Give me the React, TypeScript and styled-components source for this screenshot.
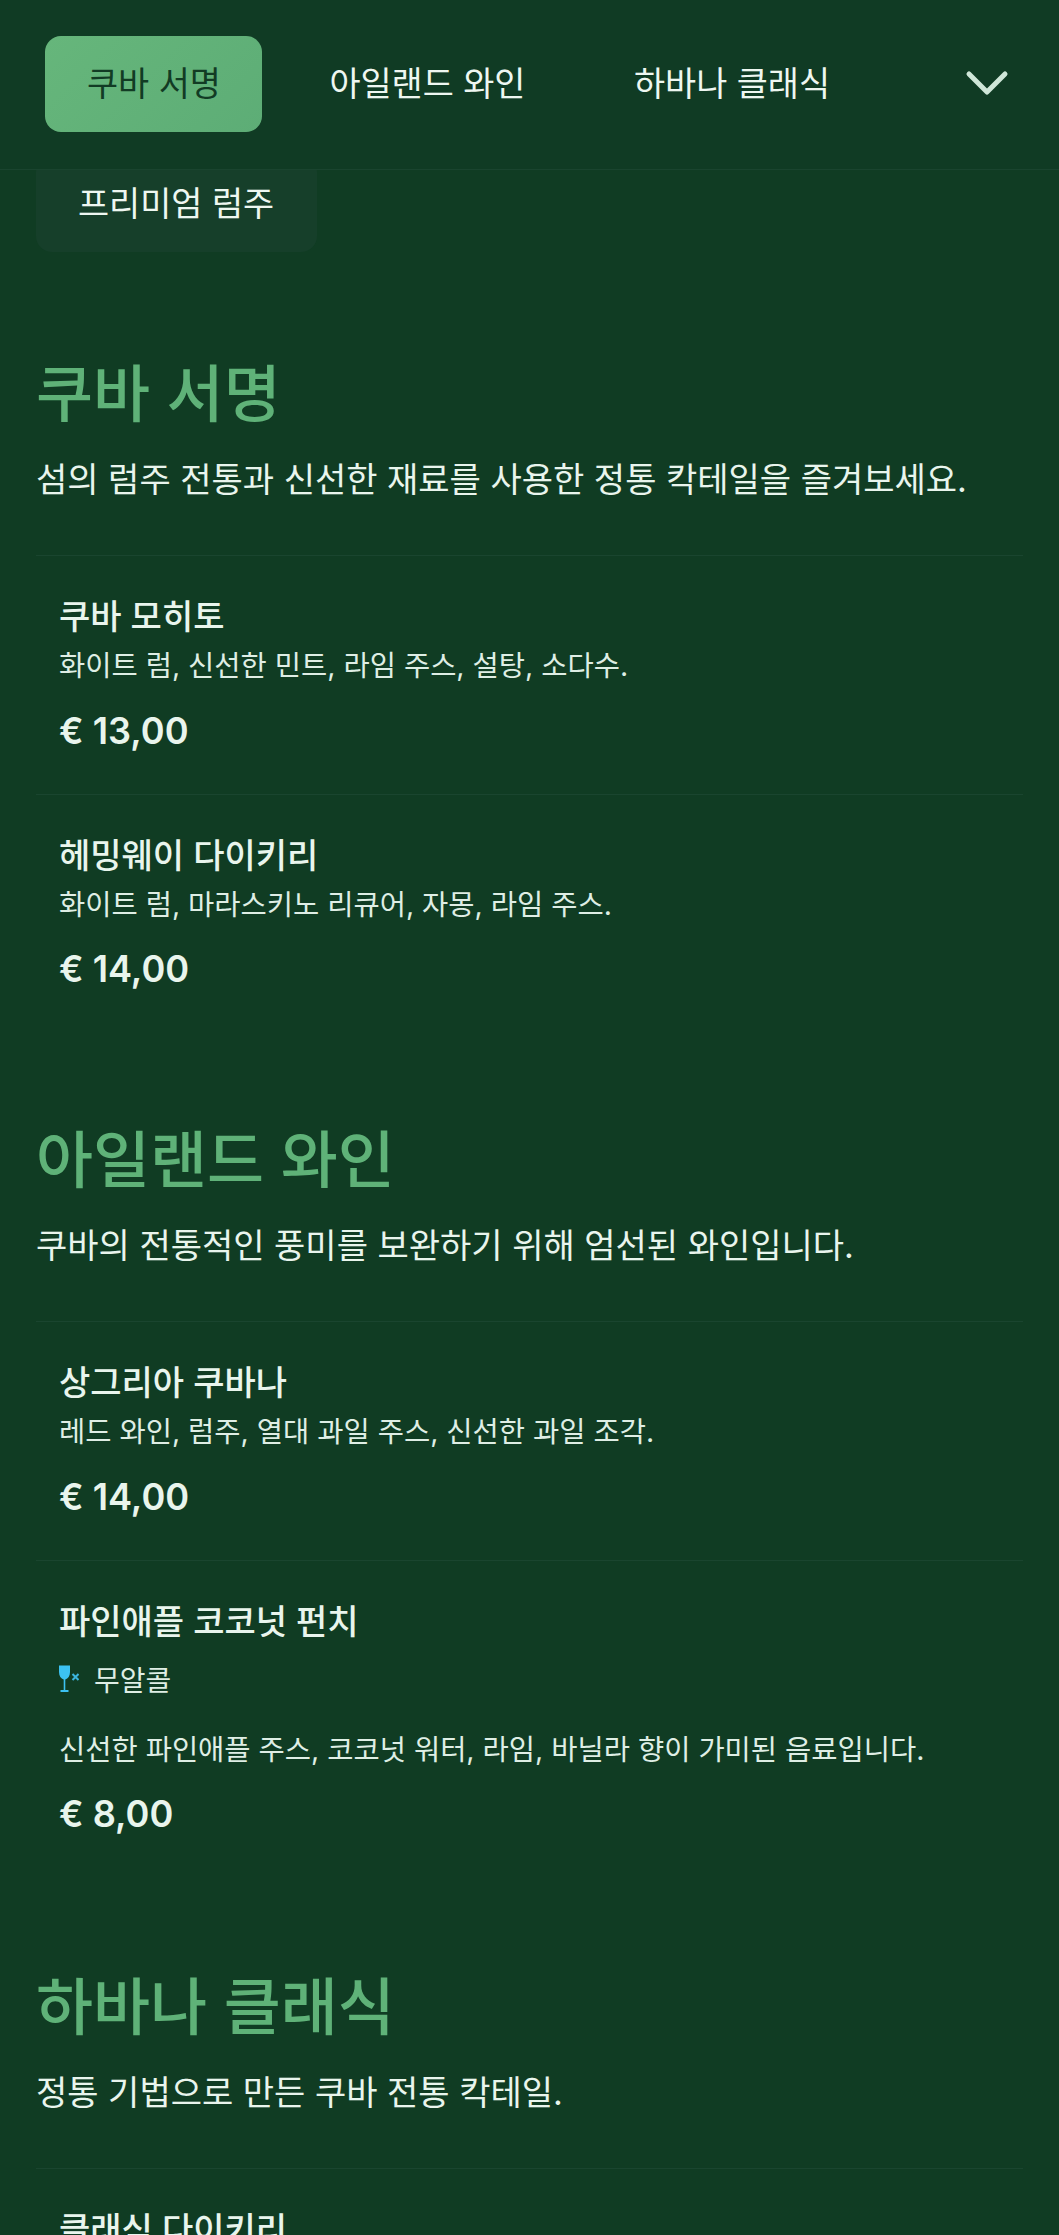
import React from 'react';
import styled, { createGlobalStyle } from 'styled-components';

const FONT = `Inter, "Noto Sans CJK KR", sans-serif`;

const GlobalStyle = createGlobalStyle`
    html, body {
        margin: 0;
        padding: 0;
        background: #103c23;
    }
    * { box-sizing: border-box; }
`;

const Page = styled.div`
    width: 1059px;
    height: 2235px;
    overflow: hidden;
    background: #103c23;
    color: #e9f5ed;
    font-family: ${FONT};
`;

const Header = styled.header`
    position: relative;
    z-index: 2;
    height: 170px;
    display: flex;
    align-items: flex-start;
    padding: 36px 50px 0 45px;
    background: #103b24;
    border-bottom: 1px solid #1a442f;
`;

const Tabs = styled.nav`
    display: flex;
    flex: 1;
    gap: 25.5px;
`;

const Tab = styled.div<{ $active?: boolean }>`
    height: 96px;
    padding: 0 41px 6px 42px;
    display: flex;
    align-items: center;
    border-radius: 16px;
    font-size: 33.8px;
    background: ${p => (p.$active ? 'linear-gradient(135deg, #66b67b, #5dad76)' : 'transparent')};
    color: ${p => (p.$active ? '#123b24' : '#eef7f1')};
`;

const Chevron = styled.svg`
    width: 44px;
    height: 27px;
    margin-top: 34px;
    flex: none;
`;

const Content = styled.main`
    padding: 0 36px;
`;

const Chip = styled.div`
    width: 281px;
    height: 96px;
    margin-top: -14px;
    padding: 0 0 6px 42px;
    display: flex;
    align-items: center;
    border-radius: 16px;
    background: #163f2a;
    font-size: 33.8px;
    color: #eef7f1;
`;

const Section = styled.section`
    margin-top: 93px;
    &:first-of-type { margin-top: 107px; }
`;

const Heading = styled.h2`
    margin: 0;
    height: 72px;
    line-height: 72px;
    font-size: 62px;
    font-weight: 500;
    color: #5fb278;
`;

const Intro = styled.p`
    margin: 25px 0 51px;
    line-height: 48px;
    font-size: 34px;
    color: #e9f5ed;
`;

const Item = styled.article<{ $tall?: boolean }>`
    padding: 37px 24px ${p => (p.$tall ? 43 : 41)}px 23px;
    border-top: 1px solid #1a452f;
`;

const ItemName = styled.h3`
    margin: 0;
    line-height: 48px;
    font-size: 34px;
    font-weight: 500;
    color: #e9f5ed;
`;

const ItemNote = styled.p`
    margin: 5px 0 0;
    line-height: 40px;
    font-size: 28.5px;
    color: #dfeee5;
`;

const Badge = styled.div`
    display: flex;
    align-items: center;
    gap: 15px;
    height: 40px;
    margin-top: 13.5px;
    margin-bottom: 30.5px;
    font-size: 28px;
    color: #dfeee5;
`;

const GlassIcon = styled.svg`
    width: 20px;
    height: 28px;
    flex: none;
`;

const Price = styled.div`
    margin-top: 22.5px;
    line-height: 44px;
    font-size: 36.2px;
    font-weight: 600;
    color: #e9f5ed;
`;

type MenuItem = { name: string; note: string; price: string; noAlcohol?: boolean };

const SECTIONS: { title: string; intro: string; items: MenuItem[] }[] = [
    {
        title: '쿠바 서명',
        intro: '섬의 럼주 전통과 신선한 재료를 사용한 정통 칵테일을 즐겨보세요.',
        items: [
            { name: '쿠바 모히토', note: '화이트 럼, 신선한 민트, 라임 주스, 설탕, 소다수.', price: '€ 13,00' },
            { name: '헤밍웨이 다이키리', note: '화이트 럼, 마라스키노 리큐어, 자몽, 라임 주스.', price: '€ 14,00' },
        ],
    },
    {
        title: '아일랜드 와인',
        intro: '쿠바의 전통적인 풍미를 보완하기 위해 엄선된 와인입니다.',
        items: [
            { name: '상그리아 쿠바나', note: '레드 와인, 럼주, 열대 과일 주스, 신선한 과일 조각.', price: '€ 14,00' },
            { name: '파인애플 코코넛 펀치', note: '신선한 파인애플 주스, 코코넛 워터, 라임, 바닐라 향이 가미된 음료입니다.', price: '€ 8,00', noAlcohol: true },
        ],
    },
    {
        title: '하바나 클래식',
        intro: '정통 기법으로 만든 쿠바 전통 칵테일.',
        items: [
            { name: '클래식 다이키리', note: '화이트 럼, 라임 주스, 설탕.', price: '€ 12,00' },
        ],
    },
];

const App: React.FC = () => (
    <Page>
        <GlobalStyle />
        <Header>
            <Tabs>
                <Tab $active>쿠바 서명</Tab>
                <Tab>아일랜드 와인</Tab>
                <Tab>하바나 클래식</Tab>
            </Tabs>
            <Chevron viewBox="0 0 44 27" fill="none">
                <path d="M4 4L22 22L40 4" stroke="#cfe6d8" strokeWidth="5" strokeLinecap="round" strokeLinejoin="round" />
            </Chevron>
        </Header>
        <Content>
            <Chip>프리미엄 럼주</Chip>
            {SECTIONS.map(section => (
                <Section key={section.title}>
                    <Heading>{section.title}</Heading>
                    <Intro>{section.intro}</Intro>
                    {section.items.map(item => (
                        <Item key={item.name} $tall={item.noAlcohol}>
                            <ItemName>{item.name}</ItemName>
                            {item.noAlcohol && (
                                <Badge>
                                    <GlassIcon viewBox="0 0 20 28">
                                        <path d="M0 .5H11V7C11 11 9 13.5 6.3 14.5V25H9.5V27H1.5V25H4.7V14.5C2 13.5 0 11 0 7Z" fill="#3cc2f2" />
                                        <path d="M13.5 9L19.5 15M19.5 9L13.5 15" stroke="#3cb5dd" strokeWidth="2" />
                                    </GlassIcon>
                                    무알콜
                                </Badge>
                            )}
                            <ItemNote>{item.note}</ItemNote>
                            <Price>{item.price}</Price>
                        </Item>
                    ))}
                </Section>
            ))}
        </Content>
    </Page>
);

export default App;
